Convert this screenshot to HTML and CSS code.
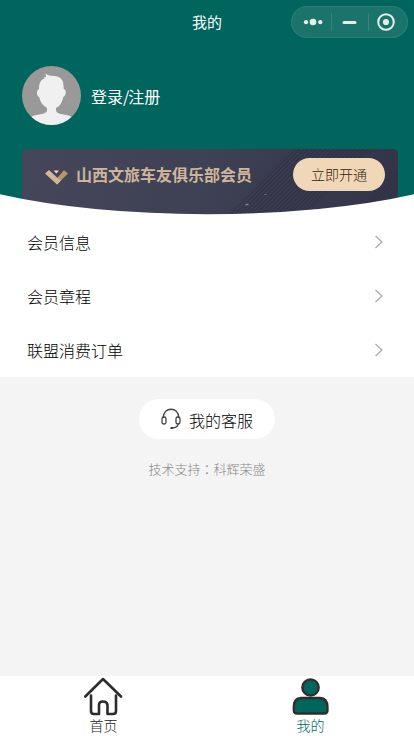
FILE: index.html
```html
<!DOCTYPE html>
<html lang="zh-CN">
<head>
<meta charset="utf-8">
<title>我的</title>
<link rel="stylesheet" href="styles.css">
</head>
<body>
<div class="page">
  <header class="hero">
    <div class="navbar">
      <h1 class="title">我的</h1>
      <div class="capsule">
        <svg width="117" height="32" viewBox="0 0 117 32">
          <g fill="#e6eeec"><circle cx="15" cy="16.2" r="2.1"/><circle cx="22" cy="16" r="3.3"/><circle cx="29.3" cy="16.2" r="2.1"/><rect x="51.5" y="15" width="14" height="3" rx="1.5"/><circle cx="95" cy="16" r="3.1"/></g>
          <circle cx="95" cy="16" r="7.8" fill="none" stroke="#e6eeec" stroke-width="2"/>
          <path d="M40.500 7v18M77.500 7v18" stroke="#37847b"/>
        </svg>
      </div>
    </div>
    <div class="user">
      <svg class="avatar" width="59" height="59" viewBox="0 0 59 59">
        <path fill="#f0f0f0" d="M9 52C11 47 24 50 25 44.500V42C20 39 18 35 17.300 31C14.500 30 14 24 17 23C17 18 18 14 22.500 12.500L22 11L24 11.200L23.500 7.500C28 12 38 7 41 16C41.500 18 41.500 21 41.800 23C45 24 44 30 41.300 31C40.500 36 38 40 34 42V44.500C35 50 48 47 50 52L42 60H18Z"/>
      </svg>
      <span class="login">登录<span class="slash">/</span>注册</span>
    </div>
    <div class="vip">
      <svg class="pattern" width="376" height="66" viewBox="0 0 376 66">
        <defs>
          <pattern id="lines" width="3" height="3" patternUnits="userSpaceOnUse" patternTransform="rotate(45)"><path d="M1.500 0V3" stroke="#292b3c" stroke-width="1.200"/></pattern>
        </defs>
        <path d="M270 0H350L284 66H204Z" fill="url(#lines)" opacity=".6"/>
        <path d="M376 20V66H330Z" fill="url(#lines)" opacity=".4"/>
        <path d="M242 45.500h3" stroke="#5c5c6c"/>
        <path d="M223.500 55.500h3" stroke="#85848f" stroke-width="1.500"/>
      </svg>
      <svg class="mark" width="24" height="16" viewBox="0 0 24 16">
        <path d="M0 3.500L4 0L12 7.500L15 10.800L12 14.500Z" fill="#d2b899"/>
        <path d="M12 14.500L23 3.500L19 0L12.500 7.800Z" fill="#b99567"/>
        <path d="M8 9L12 7.500L16 10.500L12 14.500Z" fill="#cfb598"/>
        <path d="M8.500 0.500H14L11.300 3.500Z" fill="#eed8bb"/>
      </svg>
      <span class="vip-name">山西文旅车友俱乐部会员</span>
      <span class="open">立即开通</span>
    </div>
    <svg class="curve" width="414" height="21" viewBox="0 0 414 21"><path d="M0 0.300A300 72 0 0 0 414 0.300V21H0Z" fill="#fff"/></svg>
  </header>
  <nav class="menu">
    <div class="item"><span>会员信息</span><svg width="10" height="14" viewBox="0 0 10 14"><path d="M1.500 1L8 7L1.500 13"/></svg></div>
    <div class="item"><span>会员章程</span><svg width="10" height="14" viewBox="0 0 10 14"><path d="M1.500 1L8 7L1.500 13"/></svg></div>
    <div class="item"><span>联盟消费订单</span><svg width="10" height="14" viewBox="0 0 10 14"><path d="M1.500 1L8 7L1.500 13"/></svg></div>
  </nav>
  <main class="support">
    <div class="service">
      <svg width="20" height="22" viewBox="0 0 20 22" fill="none" stroke="#444" stroke-width="1.300" stroke-linecap="round">
        <path d="M2.300 9.500C2.300 -1.500 17.700 -1.500 17.700 9.500M17.300 15.500C17 18.500 14.500 19.800 11 20"/>
        <rect x="1" y="9" width="4" height="7" rx="1.700"/><rect x="15" y="9" width="4" height="7" rx="1.700"/>
        <path d="M10.200 20h1" stroke-width="2"/>
      </svg>
      <span>我的客服</span>
    </div>
    <p class="tech">技术支持<span lang="zh-TW" class="colon">：</span>科辉荣盛</p>
  </main>
  <footer class="tabs">
    <div class="tab">
      <svg width="40" height="40" viewBox="0 0 40 40" fill="none" stroke="#2c2c2c" stroke-width="2.600" stroke-linecap="round" stroke-linejoin="round">
        <path d="M1.300 20.500L19 3L37 20.500"/>
        <path d="M7 19.500V35Q7 38 10 38H15V29Q15 25.500 19 25.500T23.500 29V38H29Q32 38 32 35V19.500"/>
      </svg>
      <span>首页</span>
    </div>
    <div class="tab active">
      <svg width="40" height="40" viewBox="0 0 40 40" fill="#00655d" stroke="#302d2d" stroke-width="2.300">
        <circle cx="19.500" cy="11.500" r="8.200"/>
        <path d="M10 22H29Q36.500 22.500 36.500 31V34.500Q36.500 37.500 33.500 37.500H6Q2.800 37.500 2.800 34.500V31Q2.800 22.500 10 22Z"/>
      </svg>
      <span>我的</span>
    </div>
  </footer>
</div>
</body>
</html>
```
FILE: styles.css
```css
* { box-sizing: border-box; }

body {
  margin: 0;
  font-family: "Noto Sans CJK SC", sans-serif;
  font-weight: 300;
  color: #000;
}

svg { display: block; flex: none; }

.page {
  width: 414px;
  height: 736px;
  display: flex;
  flex-direction: column;
  overflow: hidden;
  background: #f4f4f4;
}

.hero {
  position: relative;
  height: 215px;
  flex: none;
  background: #00655d;
}

.navbar {
  height: 44px;
  display: grid;
  grid-template-columns: 1fr auto 1fr;
  align-items: center;
}

.title {
  grid-column: 2;
  margin: 0;
  font-size: 15px;
  line-height: 22px;
  font-weight: 400;
  color: #fff;
}

.capsule {
  justify-self: end;
  width: 117px;
  height: 32px;
  margin-right: 6px;
  border-radius: 16px;
  background: #1b746b;
  box-shadow: inset 0 0 0 1px #2a7d75;
}

.user {
  display: flex;
  align-items: center;
  gap: 10px;
  padding: 22px 22px 0;
}

.avatar {
  border-radius: 50%;
  background: #999;
}

.login {
  font-size: 16px;
  line-height: 24px;
  font-weight: 400;
  color: #fff;
}

.slash { margin: 0 -1px 0 0; }

.vip {
  position: relative;
  display: flex;
  align-items: flex-start;
  height: 66px;
  margin: 24px 16px 0 22px;
  padding: 9px 13px 0 23px;
  border-radius: 5px 5px 0 0;
  background: linear-gradient(100deg, #45465a, #3e4054 50%, #333448);
}

.pattern {
  position: absolute;
  inset: 0;
}

.mark {
  position: relative;
  margin-top: 12px;
}

.vip-name {
  position: relative;
  margin: 4px 0 0 7px;
  font-size: 16px;
  line-height: 24px;
  font-weight: 700;
  color: #cdb59b;
}

.open {
  position: relative;
  width: 92px;
  height: 33px;
  margin-left: auto;
  border-radius: 17px;
  background: #f0d7b7;
  color: #35220f;
  font-size: 14px;
  line-height: 33px;
  text-align: center;
}

.curve {
  position: absolute;
  left: 0;
  bottom: 0;
}

.menu {
  height: 162px;
  flex: none;
  background: #fff;
}

.item {
  display: flex;
  align-items: center;
  justify-content: space-between;
  height: 54px;
  padding: 0 30px 0 27px;
  font-size: 16px;
}

.item svg {
  fill: none;
  stroke: #aaa;
  stroke-width: 1.3;
}

.support {
  flex: 1;
  display: flex;
  flex-direction: column;
  align-items: center;
  padding-top: 22px;
}

.service {
  display: flex;
  align-items: center;
  gap: 8px;
  width: 136px;
  height: 40px;
  padding-left: 22px;
  border-radius: 20px;
  background: #fff;
  font-size: 16px;
}

.service span { padding-top: 1px; }

.tech {
  margin: 20px 0 0;
  font-size: 13px;
  line-height: 20px;
  color: #888;
}

.colon { font-family: "Noto Sans CJK TC", sans-serif; }

.tabs {
  display: flex;
  height: 60px;
  flex: none;
  background: #fff;
}

.tab {
  flex: 1;
  display: flex;
  flex-direction: column;
  align-items: center;
  font-size: 14px;
  line-height: 18px;
  color: #222;
}

.active { color: #00655d; }
```
